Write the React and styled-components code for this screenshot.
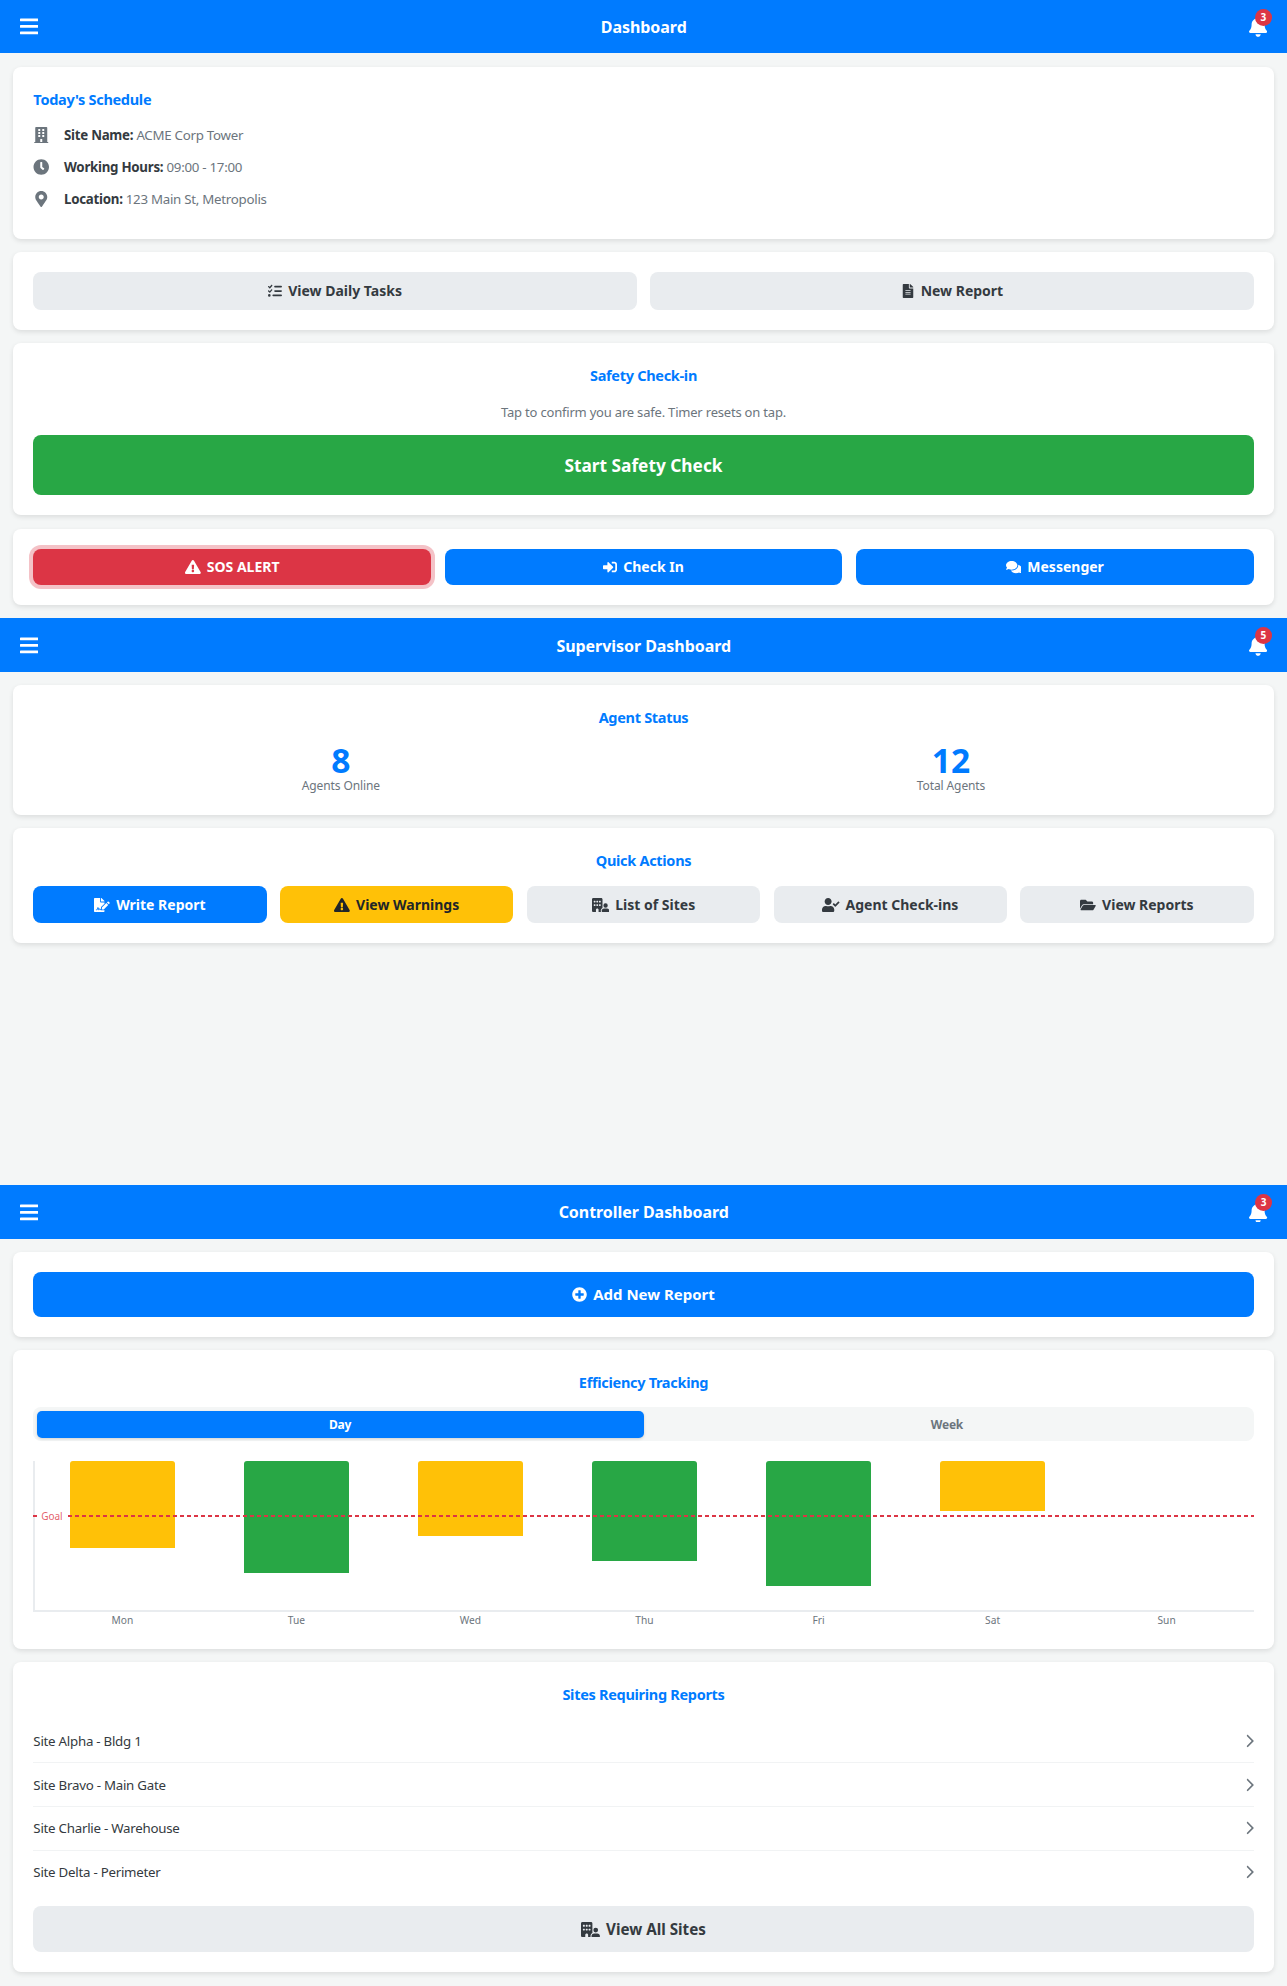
import React from "react";
import styled, { createGlobalStyle } from "styled-components";
import { FaBars, FaBell, FaBuilding, FaClock, FaComments, FaExclamationTriangle, FaFileAlt, FaFileSignature, FaFolderOpen, FaMapMarkerAlt, FaPlusCircle, FaSignInAlt, FaUserCheck } from "react-icons/fa";
import { FaBuildingUser, FaChevronRight, FaListCheck } from "react-icons/fa6";

const GlobalStyle = createGlobalStyle`
  * { box-sizing: border-box; }
  body {
    margin: 0;
    background: #f4f6f6;
    color: #343a40;
    font-family: "Noto Sans", "Open Sans", sans-serif;
  }
`;

// react-icons draws everything in a 1em square, these keep the wide glyphs at full size
const wideIcon = (Icon, width) => styled(Icon)`
  width: ${width}em;
  height: 1em;
  flex: none;
`;

const WarningIcon = wideIcon(FaExclamationTriangle, 1.125);
const CommentsIcon = wideIcon(FaComments, 1.125);
const SignatureIcon = wideIcon(FaFileSignature, 1.125);
const FolderIcon = wideIcon(FaFolderOpen, 1.125);
const SitesIcon = wideIcon(FaBuildingUser, 1.25);
const UserCheckIcon = wideIcon(FaUserCheck, 1.25);

const Header = styled.header`
  height: 53.33px;
  padding: 0 19.5px 0 20px;
  display: flex;
  align-items: center;
  justify-content: space-between;
  background: #007bff;
  color: #fff;
`;

const HeaderIcon = styled.div`
  position: relative;
  display: flex;
  font-size: 20.8px;
  svg { width: 0.875em; height: 1em; }
`;

const Badge = styled.span`
  position: absolute;
  top: -7.5px;
  right: -4.5px;
  width: 17px;
  height: 17px;
  border-radius: 50%;
  background: #dc3545;
  color: #fff;
  font-size: 10px;
  font-weight: 700;
  line-height: 17px;
  text-align: center;
`;

const HeaderTitle = styled.h1`
  margin: 1px 0 0;
  font-size: 16px;
  font-weight: 700;
  letter-spacing: -0.05px;
`;

const Main = styled.main`
  padding: 13.33px;
  display: flex;
  flex-direction: column;
  gap: 13.33px;
`;

const Card = styled.div`
  padding: 20px;
  background: #fff;
  border-radius: 8px;
  box-shadow: 0 2px 5px rgba(0, 0, 0, 0.1);
`;

const CardTitle = styled.h2`
  margin: 0 0 ${(p) => p.$gap || "13px"};
  color: #007bff;
  font-size: 14.5px;
  font-weight: 700;
  letter-spacing: -0.3px;
  line-height: 25px;
  text-align: ${(p) => (p.$left ? "left" : "center")};
`;

const InfoList = styled.div`
  padding-bottom: 4px;
`;

const InfoRow = styled.div`
  height: 31.67px;
  display: flex;
  align-items: center;
  gap: 14.2px;
  font-size: 13.3px;
  letter-spacing: -0.27px;
  color: #6c757d;
  svg { width: 16.5px; height: 16px; color: #6c757d; flex: none; }
  b { color: #343a40; font-weight: 700; }
`;

const ButtonRow = styled.div`
  display: flex;
  gap: 13.33px;
`;

const Button = styled.button`
  flex: 1;
  width: 100%;
  height: ${(p) => p.$height || "38px"};
  margin-top: ${(p) => p.$top || "0"};
  display: flex;
  align-items: center;
  justify-content: center;
  gap: 6px;
  border: none;
  border-radius: 8px;
  background: ${(p) => p.$bg || "#e9ecef"};
  color: ${(p) => p.$color || "#343a40"};
  box-shadow: ${(p) => (p.$ring ? "0 0 0 4px rgba(220, 53, 69, 0.3)" : "none")};
  font-family: inherit;
  font-size: ${(p) => p.$size || "14px"};
  font-weight: 700;
`;

const Hint = styled.p`
  margin: 0 0 12px;
  color: #6c757d;
  font-size: 13px;
  letter-spacing: -0.2px;
  line-height: 22px;
  text-align: center;
`;

const Stats = styled.div`
  display: flex;
  justify-content: space-around;
`;

const Stat = styled.div`
  text-align: center;
`;

const StatValue = styled.div`
  color: #007bff;
  font-size: 33.6px;
  font-weight: 700;
  line-height: 35.3px;
`;

const StatLabel = styled.div`
  color: #6c757d;
  font-size: 12px;
  letter-spacing: -0.1px;
  line-height: 16.3px;
`;

const Spacer = styled.div`
  height: 228.7px;
`;

const Tabs = styled.div`
  display: flex;
  padding: 3.33px;
  border-radius: 8px;
  background: #f4f6f6;
`;

const Tab = styled.div`
  flex: 1;
  height: 27px;
  border-radius: 5px;
  background: ${(p) => (p.$active ? "#007bff" : "transparent")};
  color: ${(p) => (p.$active ? "#fff" : "#6c757d")};
  box-shadow: ${(p) => (p.$active ? "0 1px 3px rgba(0, 0, 0, 0.15)" : "none")};
  font-size: 12px;
  font-weight: 700;
  letter-spacing: -0.2px;
  line-height: 27px;
  text-align: center;
`;

const Chart = styled.div`
  position: relative;
  margin-top: 20px;
`;

const Plot = styled.div`
  height: 151px;
  display: flex;
  align-items: flex-start;
  border-left: 2px solid #e9ecef;
  border-bottom: 2px solid #e9ecef;
`;

const Column = styled.div`
  flex: 1;
  display: flex;
  justify-content: center;
`;

const Bar = styled.div`
  width: 60%;
  height: ${(p) => p.$height}px;
  border-radius: 3px 3px 0 0;
  background: ${(p) => p.$color};
`;

const GoalLine = styled.div`
  position: absolute;
  top: 54.5px;
  left: 0;
  right: 0;
  height: 2px;
  background: repeating-linear-gradient(90deg, #dc3545 0 4px, transparent 4px 7px);
`;

const GoalLabel = styled.span`
  position: absolute;
  top: -6px;
  left: 5px;
  padding: 0 4px 0 3px;
  background: #fff;
  color: rgba(220, 53, 69, 0.8);
  font-size: 10px;
  letter-spacing: -0.1px;
  line-height: 14px;
`;

const Days = styled.div`
  display: flex;
  padding-left: 2px;
  margin-top: 1.5px;
  margin-bottom: 1.5px;
`;

const Day = styled.div`
  flex: 1;
  color: #6c757d;
  font-size: 10.2px;
  line-height: 14px;
  text-align: center;
`;

const SiteRow = styled.div`
  height: 43.67px;
  display: flex;
  align-items: center;
  justify-content: space-between;
  border-bottom: ${(p) => (p.$last ? "none" : "1px solid #f1f3f4")};
  color: #343a40;
  font-size: 13.3px;
  letter-spacing: -0.25px;
  svg { width: 8.75px; height: 14px; color: #6c757d; }
`;

const bars = [
  { day: "Mon", height: 87, color: "#ffc107" },
  { day: "Tue", height: 112, color: "#28a745" },
  { day: "Wed", height: 75, color: "#ffc107" },
  { day: "Thu", height: 100, color: "#28a745" },
  { day: "Fri", height: 125, color: "#28a745" },
  { day: "Sat", height: 50, color: "#ffc107" },
  { day: "Sun", height: 0, color: "#ffc107" },
];

const sites = ["Site Alpha - Bldg 1", "Site Bravo - Main Gate", "Site Charlie - Warehouse", "Site Delta - Perimeter"];

const TopBar = ({ title, count }) => (
  <Header>
    <HeaderIcon><FaBars /></HeaderIcon>
    <HeaderTitle>{title}</HeaderTitle>
    <HeaderIcon>
      <FaBell />
      <Badge>{count}</Badge>
    </HeaderIcon>
  </Header>
);

const App = () => (
  <>
    <GlobalStyle />
    <section>
      <TopBar title="Dashboard" count={3} />
      <Main>
        <Card>
          <CardTitle $left $gap="8px">Today's Schedule</CardTitle>
          <InfoList>
            <InfoRow><FaBuilding /><span><b>Site Name:</b> ACME Corp Tower</span></InfoRow>
            <InfoRow><FaClock /><span><b>Working Hours:</b> 09:00 - 17:00</span></InfoRow>
            <InfoRow><FaMapMarkerAlt /><span><b>Location:</b> 123 Main St, Metropolis</span></InfoRow>
          </InfoList>
        </Card>
        <Card>
          <ButtonRow>
            <Button><FaListCheck />View Daily Tasks</Button>
            <Button><FaFileAlt />New Report</Button>
          </ButtonRow>
        </Card>
        <Card>
          <CardTitle>Safety Check-in</CardTitle>
          <Hint>Tap to confirm you are safe. Timer resets on tap.</Hint>
          <Button $bg="#28a745" $color="#fff" $height="60px" $size="17.3px">Start Safety Check</Button>
        </Card>
        <Card>
          <ButtonRow>
            <Button $bg="#dc3545" $color="#fff" $ring $height="36.5px"><WarningIcon />SOS ALERT</Button>
            <Button $bg="#007bff" $color="#fff" $height="36.5px"><FaSignInAlt />Check In</Button>
            <Button $bg="#007bff" $color="#fff" $height="36.5px"><CommentsIcon />Messenger</Button>
          </ButtonRow>
        </Card>
      </Main>
    </section>
    <section>
      <TopBar title="Supervisor Dashboard" count={5} />
      <Main>
        <Card>
          <CardTitle>Agent Status</CardTitle>
          <Stats>
            <Stat><StatValue>8</StatValue><StatLabel>Agents Online</StatLabel></Stat>
            <Stat><StatValue>12</StatValue><StatLabel>Total Agents</StatLabel></Stat>
          </Stats>
        </Card>
        <Card>
          <CardTitle>Quick Actions</CardTitle>
          <ButtonRow>
            <Button $bg="#007bff" $color="#fff" $height="37.3px"><SignatureIcon />Write Report</Button>
            <Button $bg="#ffc107" $color="#212529" $height="37.3px"><WarningIcon />View Warnings</Button>
            <Button $height="37.3px"><SitesIcon />List of Sites</Button>
            <Button $height="37.3px"><UserCheckIcon />Agent Check-ins</Button>
            <Button $height="37.3px"><FolderIcon />View Reports</Button>
          </ButtonRow>
        </Card>
      </Main>
      <Spacer />
    </section>
    <section>
      <TopBar title="Controller Dashboard" count={3} />
      <Main>
        <Card>
          <Button $bg="#007bff" $color="#fff" $height="45px" $size="15px"><FaPlusCircle />Add New Report</Button>
        </Card>
        <Card>
          <CardTitle $gap="12px">Efficiency Tracking</CardTitle>
          <Tabs>
            <Tab $active>Day</Tab>
            <Tab>Week</Tab>
          </Tabs>
          <Chart>
            <Plot>
              {bars.map((b) => (
                <Column key={b.day}><Bar $height={b.height} $color={b.color} /></Column>
              ))}
            </Plot>
            <GoalLine><GoalLabel>Goal</GoalLabel></GoalLine>
            <Days>
              {bars.map((b) => <Day key={b.day}>{b.day}</Day>)}
            </Days>
          </Chart>
        </Card>
        <Card>
          <CardTitle $gap="12.3px">Sites Requiring Reports</CardTitle>
          {sites.map((s, i) => (
            <SiteRow key={s} $last={i === sites.length - 1}>{s}<FaChevronRight /></SiteRow>
          ))}
          <Button $height="46px" $size="15.2px" $top="12px"><SitesIcon />View All Sites</Button>
        </Card>
      </Main>
    </section>
  </>
);

export default App;
